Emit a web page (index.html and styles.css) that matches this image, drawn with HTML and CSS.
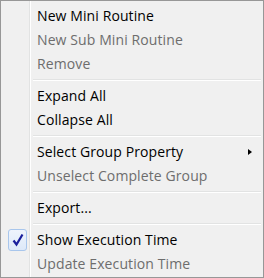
FILE: index.html
```html
<!DOCTYPE html>
<html>
<head>
<meta charset="utf-8">
<link rel="stylesheet" href="styles.css">
</head>
<body>
<div class="menu">
  <div class="item"><span class="icon"></span><span class="label">New Mini Routine</span></div>
  <div class="item disabled"><span class="icon"></span><span class="label">New Sub Mini Routine</span></div>
  <div class="item disabled"><span class="icon"></span><span class="label">Remove</span></div>
  <div class="sep"></div>
  <div class="item"><span class="icon"></span><span class="label">Expand All</span></div>
  <div class="item"><span class="icon"></span><span class="label">Collapse All</span></div>
  <div class="sep"></div>
  <div class="item"><span class="icon"></span><span class="label">Select Group Property</span><span class="arrow"></span></div>
  <div class="item disabled"><span class="icon"></span><span class="label">Unselect Complete Group</span></div>
  <div class="sep"></div>
  <div class="item"><span class="icon"></span><span class="label">Export...</span></div>
  <div class="sep"></div>
  <div class="item"><span class="icon"><span class="check"><svg width="14" height="14" viewBox="0 0 14 14"><path d="M2.5 7.5 L5.5 11.5 L11.5 1.5" fill="none" stroke="#1a1f9c" stroke-width="2.2" stroke-linejoin="miter"/></svg></span></span><span class="label">Show Execution Time</span></div>
  <div class="item disabled"><span class="icon"></span><span class="label">Update Execution Time</span></div>
</div>
</body>
</html>
```

FILE: styles.css
```css
html, body {
  margin: 0;
  padding: 0;
  background: #f0f0f0;
}
.menu {
  box-sizing: border-box;
  width: 264px;
  height: 278px;
  border: 1px solid #979797;
  padding: 3px 2px 1px 2px;
  background-color: #f0f0f0;
  background-image: linear-gradient(to right,
    transparent 28px, #e2e3e3 28px, #e2e3e3 29px,
    #ffffff 29px, #ffffff 30px, transparent 30px);
  font-family: "Open Sans", "Noto Sans", sans-serif;
  font-size: 14px;
  color: #000;
  display: flex;
  flex-direction: column;
}
.item {
  height: 24px;
  display: flex;
  align-items: center;
}
.icon {
  width: 34px;
  flex: none;
  display: flex;
  align-items: center;
}
.label {
  flex: 1;
  white-space: nowrap;
  line-height: 24px;
  letter-spacing: 0.1px;
}
.disabled .label {
  color: #6d6d6d;
}
.arrow {
  width: 0;
  height: 0;
  border-top: 3.5px solid transparent;
  border-bottom: 3.5px solid transparent;
  border-left: 4px solid #000;
  margin-right: 9px;
  margin-top: -1px;
}
.sep {
  height: 8px;
  margin-left: 30px;
  box-sizing: border-box;
  padding-top: 3px;
}
.sep::before {
  content: "";
  display: block;
  border-top: 1px solid #e2e3e3;
  border-bottom: 1px solid #ffffff;
  height: 0;
}
.check {
  box-sizing: border-box;
  width: 19px;
  height: 22px;
  margin-left: 5px;
  border: 1px solid #a8c6ec;
  border-radius: 3px;
  background: linear-gradient(#eef4fc, #dde9f9);
  display: flex;
  align-items: center;
  justify-content: center;
}
.check svg {
  display: block;
}
```
